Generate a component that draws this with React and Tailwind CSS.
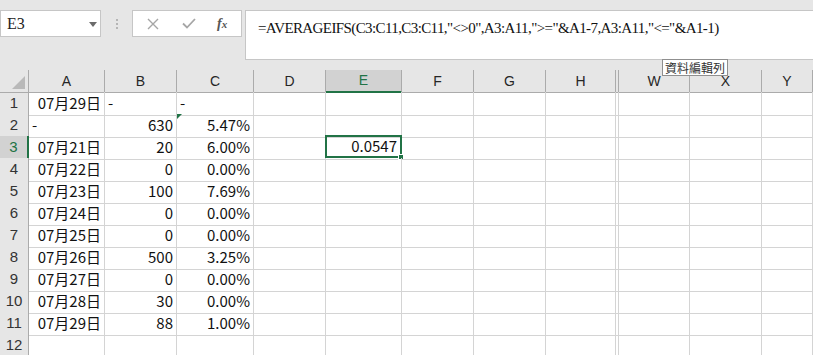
import React from 'react'

const cols = ['A', 'B', 'C', 'D', 'E', 'F', 'G', 'H', '', 'W', 'X', 'Y']

const rows = [
  ['07月29日', '-', '-'],
  ['-', '630', '5.47%'],
  ['07月21日', '20', '6.00%'],
  ['07月22日', '0', '0.00%'],
  ['07月23日', '100', '7.69%'],
  ['07月24日', '0', '0.00%'],
  ['07月25日', '0', '0.00%'],
  ['07月26日', '500', '3.25%'],
  ['07月27日', '0', '0.00%'],
  ['07月28日', '30', '0.00%'],
  ['07月29日', '88', '1.00%'],
  ['', '', ''],
]

const cellFont = { fontFamily: '"Noto Sans CJK TC", "Liberation Sans", sans-serif' }
const serif = { fontFamily: '"Liberation Serif", "Noto Sans CJK TC", serif' }
const headFont = { fontFamily: '"Liberation Sans", Arial, sans-serif' }

const gridCols = 'grid grid-cols-[29px_76px_72px_77px_72px_76px_72px_72px_70px_3px_71px_72px_1fr]'

const align = (v) => (v === '-' ? 'justify-start pl-[3px]' : 'justify-end pr-[3px]')

function Toolbar() {
  return (
    <div className="h-[70px] bg-[#e6e6e6] pt-[10px] flex items-start">
      <div className="w-[101px] h-[27px] bg-white border border-[#c6c6c6] flex items-center pl-[6px] relative">
        <span className="text-[16px] text-[#222]" style={serif}>E3</span>
        <svg className="absolute left-[88px] top-[11px]" width="8" height="5" viewBox="0 0 8 5">
          <path d="M0 0 H8 L4 5 Z" fill="#6b6b6b" />
        </svg>
      </div>
      <div className="w-[31px] h-[27px] flex flex-col items-center justify-center gap-[2px]">
        <span className="w-[2px] h-[2px] bg-[#b5b5b5]" />
        <span className="w-[2px] h-[2px] bg-[#b5b5b5]" />
        <span className="w-[2px] h-[2px] bg-[#b5b5b5]" />
      </div>
      <div className="w-[110px] h-[27px] bg-white border border-[#c6c6c6] flex items-center">
        <svg className="ml-[14px]" width="12" height="12" viewBox="0 0 12 12">
          <path d="M1 1 L11 11 M11 1 L1 11" stroke="#a6a6a6" strokeWidth="1.4" />
        </svg>
        <svg className="ml-[23px]" width="14" height="11" viewBox="0 0 14 11">
          <path d="M1 5.5 L5 9.5 L13 1" stroke="#a6a6a6" strokeWidth="1.8" fill="none" />
        </svg>
        <span className="ml-[21px] text-[14px] italic font-bold text-[#555]" style={serif}>
          f<span className="text-[11px]">x</span>
        </span>
      </div>
      <div className="ml-[3px] flex-1 h-[50px] bg-white border border-[#c6c6c6] border-r-0 pl-[12px] pt-[4px]">
        <span className="text-[15px] text-[#111] tracking-[-0.6px]" style={serif}>
          =AVERAGEIFS(C3:C11,C3:C11,"&lt;&gt;0",A3:A11,"&gt;="&amp;A1-7,A3:A11,"&lt;="&amp;A1-1)
        </span>
      </div>
    </div>
  )
}

function HeaderRow() {
  return (
    <div className={`${gridCols} h-[22px]`}>
      <div className="bg-[#e6e6e6] border-r border-b border-[#ababab] relative">
        <svg className="absolute right-[3px] bottom-[3px]" width="13" height="13" viewBox="0 0 13 13">
          <path d="M13 0 V13 H0 Z" fill="#b9b9b9" />
        </svg>
      </div>
      {cols.map((c, i) => {
        const sel = c === 'E'
        return (
          <div
            key={i}
            className={
              sel
                ? 'bg-[#d2d2d2] border-r border-[#ababab] border-b-2 border-b-[#217346] flex items-center justify-center text-[14px] text-[#217346]'
                : 'bg-[#e6e6e6] border-r border-b border-[#ababab] flex items-center justify-center text-[14px] text-[#262626]'
            }
            style={headFont}
          >
            {c}
          </div>
        )
      })}
    </div>
  )
}

function DataRow({ n, vals }) {
  const sel = n === 3
  return (
    <div className={`${gridCols} h-[22px]`}>
      <div
        className={
          sel
            ? 'bg-[#d2d2d2] border-r-2 border-r-[#217346] border-b border-[#ababab] flex items-center justify-center text-[15px] text-[#217346]'
            : 'bg-[#e6e6e6] border-r border-b border-[#ababab] flex items-center justify-center text-[15px] text-[#333]'
        }
        style={headFont}
      >
        {n}
      </div>
      {cols.map((c, i) => {
        const v = i < 3 ? vals[i] : ''
        return (
          <div
            key={i}
            className={`border-r border-b border-[#d4d4d4] flex items-center text-[15px] text-[#111] relative ${v ? align(v) : ''}`}
            style={cellFont}
          >
            {n === 2 && c === 'C' && (
              <svg className="absolute left-0 top-0" width="5" height="5" viewBox="0 0 5 5">
                <path d="M0 0 H5 L0 5 Z" fill="#217346" />
              </svg>
            )}
            {sel && c === 'E' && (
              <div className="absolute -left-[1px] -top-[1px] w-[77px] h-[23px] border-2 border-[#217346] flex items-center justify-end pr-[3px]">
                0.0547
                <span className="absolute -right-[4px] -bottom-[4px] w-[6px] h-[6px] bg-[#217346] border border-white" />
              </div>
            )}
            {v}
          </div>
        )
      })}
    </div>
  )
}

export default function App() {
  return (
    <div className="w-[813px] h-[355px] overflow-hidden bg-white relative">
      <Toolbar />
      <HeaderRow />
      {rows.map((r, i) => (
        <DataRow key={i} n={i + 1} vals={r} />
      ))}
      <div
        className="absolute left-[662px] top-[59px] px-[2px] h-[17px] bg-white border border-[#8f8f8f] text-[12px] leading-[15px] text-[#333]"
        style={cellFont}
      >
        資料編輯列
      </div>
    </div>
  )
}
